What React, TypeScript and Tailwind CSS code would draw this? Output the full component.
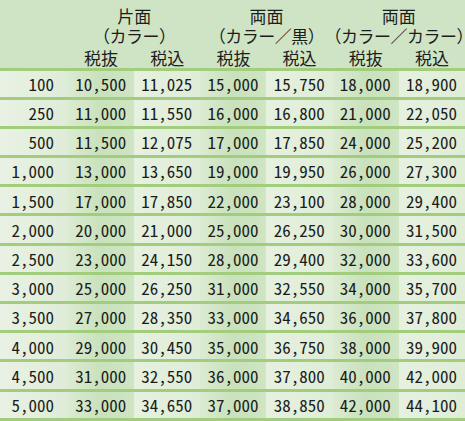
const groups = [
  { title: '片面', sub: '（カラー）' },
  { title: '両面', sub: '（カラー／黒）' },
  { title: '両面', sub: '（カラー／カラー）' },
];

const rows: [string, string[]][] = [
  ['100', ['10,500', '11,025', '15,000', '15,750', '18,000', '18,900']],
  ['250', ['11,000', '11,550', '16,000', '16,800', '21,000', '22,050']],
  ['500', ['11,500', '12,075', '17,000', '17,850', '24,000', '25,200']],
  ['1,000', ['13,000', '13,650', '19,000', '19,950', '26,000', '27,300']],
  ['1,500', ['17,000', '17,850', '22,000', '23,100', '28,000', '29,400']],
  ['2,000', ['20,000', '21,000', '25,000', '26,250', '30,000', '31,500']],
  ['2,500', ['23,000', '24,150', '28,000', '29,400', '32,000', '33,600']],
  ['3,000', ['25,000', '26,250', '31,000', '32,550', '34,000', '35,700']],
  ['3,500', ['27,000', '28,350', '33,000', '34,650', '36,000', '37,800']],
  ['4,000', ['29,000', '30,450', '35,000', '36,750', '38,000', '39,900']],
  ['4,500', ['31,000', '32,550', '36,000', '37,800', '40,000', '42,000']],
  ['5,000', ['33,000', '34,650', '37,000', '38,850', '42,000', '44,100']],
];

const numFont = "font-['Noto_Sans_Mono_CJK_JP','Noto_Sans_CJK_JP',monospace]";

export default function App() {
  return (
    <div className="w-[465px] h-[421px] overflow-hidden bg-[#cfe4c5] text-[#1c1c1c] font-['Noto_Sans_CJK_JP','Noto_Sans',sans-serif]">
      {/* header */}
      <div className="grid grid-cols-[68px_repeat(6,1fr)] h-[67.5px] text-[17px]">
        <div className="row-span-2" />
        {groups.map((g, i) => (
          <div key={i} className="col-span-2 flex flex-col items-center pt-[6px] leading-[19.5px]">
            <div className="flex justify-center whitespace-nowrap">{g.title}</div>
            <div className="flex justify-center whitespace-nowrap w-full tracking-[-0.5px]">{g.sub}</div>
          </div>
        ))}
        {groups.map((g, i) => (
          <div key={'s' + i} className="col-span-2 grid grid-cols-2 mt-[2.5px] leading-[20px]">
            <div className="text-center">税抜</div>
            <div className="text-center">税込</div>
          </div>
        ))}
      </div>

      {/* body */}
      {rows.map(([qty, prices]) => (
        <div
          key={qty}
          className={`grid grid-cols-[68px_repeat(6,1fr)] h-[29.2px] border-t-[3px] border-[#a2cd7c] text-[17px] ${numFont}`}
        >
          <div className="flex items-center justify-end pr-[14px] bg-linear-to-r from-[#e9f2e4] to-[#dfecd8]">{qty}</div>
          {prices.map((p, j) => (
            <div
              key={j}
              className={
                j % 2 === 0
                  ? 'flex items-center justify-end pr-2 bg-linear-to-r from-[#dbebd2] via-[#c9e1bc] to-[#cfe5c3]'
                  : 'flex items-center justify-end pr-2 bg-linear-to-r from-[#e6f1e0] to-[#dfedd7]'
              }
            >
              {p}
            </div>
          ))}
        </div>
      ))}
      <div className="h-[3px] bg-[#a2cd7c]" />
    </div>
  );
}
